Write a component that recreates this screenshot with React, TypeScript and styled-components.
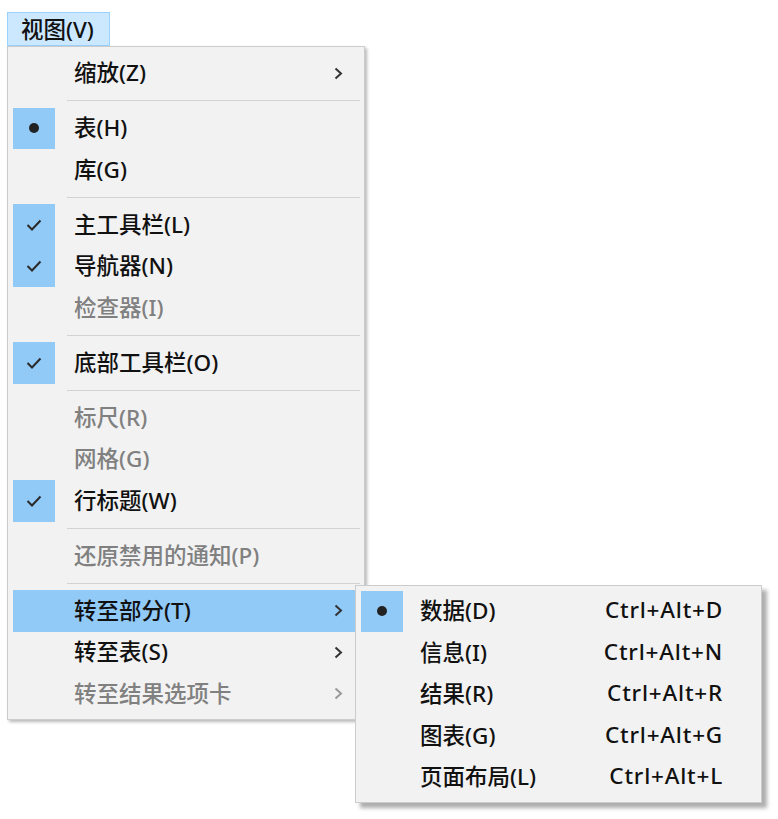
import styled, { createGlobalStyle } from 'styled-components';

const GlobalStyle = createGlobalStyle`
  html, body {
    margin: 0;
    background: #ffffff;
  }
  body {
    font-family: "Noto Sans", "Noto Sans CJK SC", sans-serif;
    font-size: 22.5px;
    font-weight: 500;
    color: #111;
  }
`;

const Page = styled.div`
  padding: 12px 0 0 7px;
  height: 807px;
`;

const MenuBarItem = styled.div`
  box-sizing: border-box;
  width: 103px;
  height: 34px;
  padding: 0 0 2px 13px;
  display: flex;
  align-items: center;
  background: #cce8ff;
  border: 1px solid #99d1ff;
`;

const Menu = styled.div<{ $width: number }>`
  box-sizing: border-box;
  width: ${(p) => p.$width}px;
  background: #f2f2f2;
  border: 1px solid #cccccc;
  padding: 5.5px 4px 4px 5px;
  box-shadow: 2px 2px 3px rgba(0, 0, 0, 0.28);
`;

const Flyout = styled(Menu)`
  position: absolute;
  left: 342px;
  top: -5.5px;
  z-index: 2;
  padding-top: 5px;
  box-shadow: 5px 5px 4px rgba(0, 0, 0, 0.32);
`;

const Item = styled.div<{ $active?: boolean; $disabled?: boolean }>`
  position: relative;
  height: 41.5px;
  display: flex;
  align-items: center;
  background: ${(p) => (p.$active ? '#91c9f7' : 'transparent')};
  color: ${(p) => (p.$disabled ? '#808080' : '#111')};
`;

const IconCell = styled.div<{ $on?: boolean }>`
  width: 42px;
  height: 100%;
  flex: none;
  display: flex;
  align-items: center;
  justify-content: center;
  background: ${(p) => (p.$on ? '#91c9f7' : 'transparent')};
`;

const Label = styled.span<{ $gap: number }>`
  flex: 1;
  padding-left: ${(p) => p.$gap}px;
  padding-bottom: 3px;
  white-space: nowrap;
`;

const Shortcut = styled.span`
  padding: 0 34px 3px 0;
  white-space: nowrap;
  letter-spacing: 0.8px;
`;

const Arrow = styled.svg`
  width: 9px;
  height: 13px;
  margin-right: 17px;
`;

const Dot = styled.span`
  width: 10px;
  height: 10px;
  border-radius: 50%;
  background: #222;
`;

const Separator = styled.div`
  height: 13.5px;
  display: flex;
  align-items: center;
  padding-left: 54px;
  &::after {
    content: '';
    flex: 1;
    height: 1px;
    background: #d2d2d2;
  }
`;

type Mark = 'check' | 'dot' | undefined;

function MarkIcon({ mark }: { mark: Mark }) {
  if (mark === 'dot') return <Dot />;
  if (mark === 'check')
    return (
      <svg width="16" height="12" viewBox="0 0 16 12">
        <polyline points="1.5,6 6,10.5 14.5,1.5" fill="none" stroke="#2a2a2a" strokeWidth="2" />
      </svg>
    );
  return null;
}

function ArrowIcon({ disabled }: { disabled?: boolean }) {
  return (
    <Arrow viewBox="0 0 9 13">
      <polyline points="1.5,1.5 7,6.5 1.5,11.5" fill="none" stroke={disabled ? '#9a9a9a' : '#333'} strokeWidth="2" />
    </Arrow>
  );
}

const sections = [
  { label: '数据(D)', key: 'Ctrl+Alt+D', mark: 'dot' as Mark },
  { label: '信息(I)', key: 'Ctrl+Alt+N' },
  { label: '结果(R)', key: 'Ctrl+Alt+R' },
  { label: '图表(G)', key: 'Ctrl+Alt+G' },
  { label: '页面布局(L)', key: 'Ctrl+Alt+L' },
];

function SectionMenu() {
  return (
    <Flyout $width={407}>
      {sections.map((s) => (
        <Item key={s.label}>
          <IconCell $on={!!s.mark}>
            <MarkIcon mark={s.mark} />
          </IconCell>
          <Label $gap={17}>{s.label}</Label>
          <Shortcut>{s.key}</Shortcut>
        </Item>
      ))}
    </Flyout>
  );
}

type Entry =
  | { sep: true }
  | { sep?: false; label: string; mark?: Mark; disabled?: boolean; sub?: boolean; active?: boolean; flyout?: boolean };

const entries: Entry[] = [
  { label: '缩放(Z)', sub: true },
  { sep: true },
  { label: '表(H)', mark: 'dot' },
  { label: '库(G)' },
  { sep: true },
  { label: '主工具栏(L)', mark: 'check' },
  { label: '导航器(N)', mark: 'check' },
  { label: '检查器(I)', disabled: true },
  { sep: true },
  { label: '底部工具栏(O)', mark: 'check' },
  { sep: true },
  { label: '标尺(R)', disabled: true },
  { label: '网格(G)', disabled: true },
  { label: '行标题(W)', mark: 'check' },
  { sep: true },
  { label: '还原禁用的通知(P)', disabled: true },
  { sep: true },
  { label: '转至部分(T)', sub: true, active: true, flyout: true },
  { label: '转至表(S)', sub: true },
  { label: '转至结果选项卡', sub: true, disabled: true },
];

export default function App() {
  return (
    <>
      <GlobalStyle />
      <Page>
        <MenuBarItem>视图(V)</MenuBarItem>
        <Menu $width={358}>
          {entries.map((e, i) =>
            e.sep ? (
              <Separator key={i} />
            ) : (
              <Item key={i} $active={e.active} $disabled={e.disabled}>
                <IconCell $on={!!e.mark}>
                  <MarkIcon mark={e.mark} />
                </IconCell>
                <Label $gap={19}>{e.label}</Label>
                {e.sub && <ArrowIcon disabled={e.disabled} />}
                {e.flyout && <SectionMenu />}
              </Item>
            )
          )}
        </Menu>
      </Page>
    </>
  );
}
